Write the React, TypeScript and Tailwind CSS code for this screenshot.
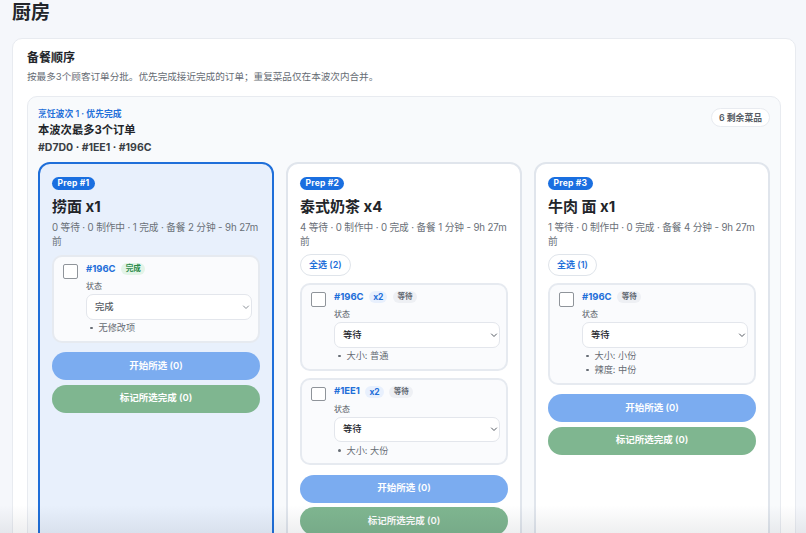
const FONT = "font-['Inter','Noto_Sans_CJK_SC',sans-serif]";

type Order = {
  id: string;
  qty?: string;
  status: string;
  value: string;
  mods: string[];
};

type Prep = {
  rank: number;
  title: string;
  meta: string;
  selectAll?: string;
  active?: boolean;
  orders: Order[];
};

const PREPS: Prep[] = [
  {
    rank: 1,
    title: "捞面 x1",
    meta: "0 等待 · 0 制作中 · 1 完成 · 备餐 2 分钟 - 9h 27m 前",
    active: true,
    orders: [{ id: "#196C", status: "完成", value: "完成", mods: ["无修改项"] }],
  },
  {
    rank: 2,
    title: "泰式奶茶 x4",
    meta: "4 等待 · 0 制作中 · 0 完成 · 备餐 1 分钟 - 9h 27m 前",
    selectAll: "全选 (2)",
    orders: [
      { id: "#196C", qty: "x2", status: "等待", value: "等待", mods: ["大小: 普通"] },
      { id: "#1EE1", qty: "x2", status: "等待", value: "等待", mods: ["大小: 大份"] },
    ],
  },
  {
    rank: 3,
    title: "牛肉 面 x1",
    meta: "1 等待 · 0 制作中 · 0 完成 · 备餐 4 分钟 - 9h 27m 前",
    selectAll: "全选 (1)",
    orders: [{ id: "#196C", status: "等待", value: "等待", mods: ["大小: 小份", "辣度: 中份"] }],
  },
];

function OrderRow({ order }: { order: Order }) {
  const done = order.status === "完成";
  return (
    <div className="flex gap-[8.5px] rounded-[10px] border-2 border-[#e6eaf0] bg-[#fafbfd] pt-[5px] pr-[6.5px] pb-[5.5px] pl-[9px]">
      <input
        type="checkbox"
        className="mt-[2px] h-[14.5px] w-[14.5px] shrink-0 appearance-none rounded-[2px] border border-[#8f949a] bg-white"
      />
      <div className="min-w-0 flex-1">
        <div className="flex h-[14px] items-center gap-[5.5px]">
          <span className="text-[9.5px] font-bold text-[#1f6fd9]">{order.id}</span>
          {order.qty && (
            <span className="rounded-full bg-[#e8f0fd] px-[4px] text-[8.5px] leading-[12px] font-bold text-[#1f6fd9]">
              {order.qty}
            </span>
          )}
          <span
            className={`rounded-full px-[4.5px] text-[7.6px] leading-[12px] font-semibold ${
              done ? "bg-[#e3f4e8] text-[#2a8a4a]" : "bg-[#eef0f4] text-[#5f6670]"
            }`}
          >
            {order.status}
          </span>
        </div>
        <div className="mt-[4px] text-[8px] leading-[12px] text-[#555b63]">状态</div>
        <div className="mt-[2px] flex h-[25.5px] items-center justify-between rounded-[7px] border border-[#e3e6ec] bg-white pl-[8px]">
          <span className={`text-[9.3px] font-medium ${done ? "text-[#555b63]" : "text-[#22252a]"}`}>
            {order.value}
          </span>
          <svg width="10" height="10" viewBox="0 0 10 10" fill="none" stroke={done ? "#8a9098" : "#555b63"} strokeWidth="1">
            <path d="M2.2 3.7 5 6.5 7.8 3.7" />
          </svg>
        </div>
        <ul className="mt-[1.5px]">
          {order.mods.map((m) => (
            <li key={m} className="flex h-[14px] items-center text-[9.2px] text-[#666c74]">
              <span className="mr-[6px] ml-[4px] h-[2.5px] w-[2.5px] rounded-full bg-[#666c74]" />
              {m}
            </li>
          ))}
        </ul>
      </div>
    </div>
  );
}

function PrepCard({ prep }: { prep: Prep }) {
  return (
    <div
      className={`min-h-[400px] rounded-[12px] border-2 px-[12px] pt-[13px] ${
        prep.active ? "border-[#1f6fd9] bg-[#e8f0fc]" : "border-[#e0e5ec] bg-white"
      }`}
    >
      <span className="block w-fit rounded-full bg-[#1a6fe0] px-[5.5px] text-[8.5px] leading-[13px] font-bold tracking-[0.2px] text-white">
        Prep #{prep.rank}
      </span>
      <div className="mt-[5px] text-[15px] leading-[24px] font-bold text-[#22252a]">{prep.title}</div>
      <div className="mt-[2px] text-[9.7px] leading-[14px] tracking-[-0.12px] text-[#6a7078]">{prep.meta}</div>
      {prep.selectAll && (
        <button className="mt-[5px] block h-[22px] rounded-full border border-[#dfe4ea] bg-white px-[8px] text-[9px] font-semibold text-[#1f6fd9]">
          {prep.selectAll}
        </button>
      )}
      <div className={`flex flex-col gap-[7px] ${prep.selectAll ? "mt-[7px]" : "mt-[6px]"}`}>
        {prep.orders.map((o) => (
          <OrderRow key={o.id} order={o} />
        ))}
      </div>
      <div className="mt-[9.5px] flex flex-col gap-[4.5px]">
        <button className="h-[28px] rounded-full bg-[#7bacf0] text-[9.5px] font-semibold text-white">
          开始所选 (0)
        </button>
        <button className="h-[28px] rounded-full bg-[#7fb690] text-[9.5px] font-semibold text-white">
          标记所选完成 (0)
        </button>
      </div>
    </div>
  );
}

export default function App() {
  return (
    <div className={`relative h-[533px] overflow-hidden bg-[#f5f7fb] pr-[10px] pl-[12px] ${FONT}`}>
      <h1 className="pt-[1px] text-[19px] leading-[24px] font-bold text-[#22252a]">厨房</h1>
      <div className="mt-[13px] rounded-[10px] border border-[#e8ebf0] bg-white px-[14px] pt-[11px]">
        <h2 className="text-[12px] leading-[16px] font-bold text-[#22252a]">备餐顺序</h2>
        <p className="mt-[4px] text-[9.6px] leading-[14px] text-[#666c74]">
          按最多3个顾客订单分批。优先完成接近完成的订单；重复菜品仅在本波次内合并。
        </p>
        <div className="mt-[12px] rounded-[10px] border border-[#e8ebf0] bg-[#f8fafc] px-[10px] pt-[11px]">
          <div className="flex items-start justify-between">
            <div>
              <div className="text-[8.8px] leading-[12px] font-semibold text-[#1f6fd9]">烹饪波次 1 · 优先完成</div>
              <div className="mt-[2px] text-[11.3px] leading-[16px] font-bold text-[#22252a]">本波次最多3个订单</div>
              <div className="mt-[1.5px] text-[10.5px] leading-[15px] font-bold text-[#3a3f45]">#D7D0 · #1EE1 · #196C</div>
            </div>
            <span className="rounded-full border border-[#e8ebf0] bg-white px-[7px] text-[8.8px] leading-[17px] font-semibold text-[#555b63]">
              6 剩余菜品
            </span>
          </div>
          <div className="mt-[7.5px] grid grid-cols-3 gap-[12px]">
            {PREPS.map((p) => (
              <PrepCard key={p.rank} prep={p} />
            ))}
          </div>
        </div>
      </div>
      <div className="pointer-events-none absolute inset-x-0 bottom-0 h-[28px] bg-gradient-to-b from-transparent to-[#0f172a]/[0.07]" />
    </div>
  );
}
